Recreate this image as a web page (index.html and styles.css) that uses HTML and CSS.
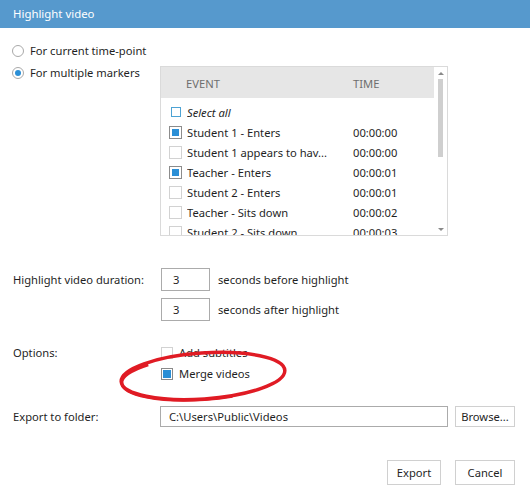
FILE: index.html
```html
<!DOCTYPE html>
<html>
<head>
<meta charset="utf-8">
<link rel="stylesheet" href="styles.css">
</head>
<body>
<div class="dialog">
  <div class="title">Highlight video</div>
  <div class="content">
    <div class="markers">
      <label class="radio-row span-all"><span class="radio"></span>For current time-point</label>
      <label class="radio-row second"><span class="radio on"></span>For multiple markers</label>
      <div class="listbox">
        <div class="lb-main">
          <div class="lb-head"><span class="col-event">EVENT</span><span class="col-time">TIME</span></div>
          <div class="lb-rows">
            <div class="lb-row"><span class="cb-slot"><span class="cb-mini"></span></span><span class="col-name italic">Select all</span></div>
            <div class="lb-row"><span class="cb-slot"><span class="cb checked"></span></span><span class="col-name">Student 1 - Enters</span><span class="col-t">00:00:00</span></div>
            <div class="lb-row"><span class="cb-slot"><span class="cb"></span></span><span class="col-name">Student 1 appears to hav...</span><span class="col-t">00:00:00</span></div>
            <div class="lb-row"><span class="cb-slot"><span class="cb checked"></span></span><span class="col-name">Teacher - Enters</span><span class="col-t">00:00:01</span></div>
            <div class="lb-row"><span class="cb-slot"><span class="cb"></span></span><span class="col-name">Student 2 - Enters</span><span class="col-t">00:00:01</span></div>
            <div class="lb-row"><span class="cb-slot"><span class="cb"></span></span><span class="col-name">Teacher - Sits down</span><span class="col-t">00:00:02</span></div>
            <div class="lb-row"><span class="cb-slot"><span class="cb"></span></span><span class="col-name">Student 2 - Sits down</span><span class="col-t">00:00:03</span></div>
          </div>
        </div>
        <div class="scrollbar">
          <span class="arrow up"></span>
          <span class="thumb"></span>
          <span class="spacer"></span>
          <span class="arrow down"></span>
        </div>
      </div>
    </div>

    <div class="form">
      <div class="label dur-label">Highlight video duration:</div>
      <div class="ctrl dur1"><span class="num">3</span><span>seconds before highlight</span></div>
      <div class="ctrl dur2"><span class="num">3</span><span>seconds after highlight</span></div>

      <div class="label opt-label">Options:</div>
      <div class="ctrl opt1"><span class="cb opt"></span><span>Add subtitles</span></div>
      <div class="ctrl opt2"><span class="cb opt checked"></span><span>Merge videos</span></div>

      <div class="label exp-label">Export to folder:</div>
      <div class="ctrl exp"><span class="path">C:\Users\Public\Videos</span><span class="btn browse">Browse...</span></div>
    </div>

    <div class="footer">
      <span class="btn big export">Export</span>
      <span class="btn big cancel">Cancel</span>
    </div>
  </div>

  <svg class="annot" width="530" height="497" viewBox="0 0 530 497">
    <ellipse cx="203" cy="376" rx="82" ry="23" fill="none" stroke="#e01b24" stroke-width="3.5" transform="rotate(-4 203 376)"/>
    <ellipse cx="203" cy="377.5" rx="81.5" ry="22" fill="none" stroke="#e01b24" stroke-width="3" stroke-dasharray="0 60 150 400" transform="rotate(-4 203 376)"/>
  </svg>
</div>
</body>
</html>
```

FILE: styles.css
```css
html, body {
  margin: 0;
  padding: 0;
  background: #ffffff;
}
body {
  font-family: "Noto Sans", "DejaVu Sans", sans-serif;
  font-size: 11.2px;
  color: #1f1f1f;
}
.dialog {
  position: relative;
  width: 530px;
  height: 497px;
  overflow: hidden;
}
.title {
  height: 28px;
  line-height: 27px;
  background: #5699cd;
  color: #ffffff;
  padding-left: 13px;
  font-size: 11.4px;
}
.content {
  padding: 0 15px 0 12px;
}
.markers {
  display: grid;
  grid-template-columns: 148px 288px;
  margin-top: 12px;
}
.span-all { grid-column: 1 / -1; }
.radio-row {
  display: flex;
  align-items: center;
  height: 20px;
  gap: 6px;
}
.radio-row.second {
  align-self: start;
  margin-top: 2px;
}
.radio {
  width: 12px;
  height: 12px;
  box-sizing: border-box;
  border: 1px solid #a9a9a9;
  border-radius: 50%;
  display: flex;
  align-items: center;
  justify-content: center;
  margin-top: 1px;
}
.radio.on::after {
  content: "";
  width: 6px;
  height: 6px;
  border-radius: 50%;
  background: #2b8fd6;
}
.listbox {
  margin-top: 6px;
  width: 288px;
  height: 170px;
  box-sizing: border-box;
  border: 1px solid #dadada;
  display: flex;
  overflow: hidden;
}
.lb-main {
  width: 273px;
  display: flex;
  flex-direction: column;
}
.lb-head {
  height: 31px;
  box-sizing: border-box;
  padding-top: 1px;
  flex: none;
  background: #e6e6e6;
  color: #6e6e6e;
  display: flex;
  align-items: center;
  padding-left: 25px;
}
.col-event { width: 167px; }
.lb-rows { padding-top: 4px; }
.lb-row {
  height: 20px;
  display: flex;
  align-items: center;
  padding-left: 8px;
  white-space: nowrap;
}
.cb-slot {
  width: 13px;
  height: 13px;
  margin-right: 5px;
  display: flex;
  align-items: center;
  justify-content: center;
}
.col-name { width: 166px; overflow: hidden; }
.italic { font-style: italic; }
.cb {
  width: 13px;
  height: 13px;
  box-sizing: border-box;
  border: 1px solid #d2d2d2;
  display: flex;
  align-items: center;
  justify-content: center;
  flex: none;
}
.cb.checked { border-color: #8c8c8c; }
.cb.checked::after {
  content: "";
  width: 7px;
  height: 7px;
  background: #2b8fd6;
}
.cb-mini {
  width: 10px;
  height: 10px;
  box-sizing: border-box;
  border: 1px solid #4da3d4;
}
.scrollbar {
  width: 13px;
  display: flex;
  flex-direction: column;
  align-items: center;
}
.arrow {
  width: 0;
  height: 0;
  border-left: 3px solid transparent;
  border-right: 3px solid transparent;
}
.arrow.up {
  margin-top: 5px;
  border-bottom: 3px solid #8a8a8a;
}
.arrow.down {
  margin-bottom: 4px;
  border-top: 3px solid #8a8a8a;
}
.thumb {
  margin-top: 4px;
  width: 5px;
  height: 78px;
  background: #cfcfcf;
}
.spacer { flex: 1; }

.form {
  display: grid;
  grid-template-columns: 148px 1fr;
  margin-top: 32px;
}
.label {
  grid-column: 1;
  padding-left: 1px;
  display: flex;
  align-items: center;
}
.ctrl {
  grid-column: 2;
  display: flex;
  align-items: center;
  gap: 8px;
  padding-left: 1px;
}
.dur-label { grid-row: 1; height: 23px; }
.dur1 { grid-row: 1; }
.dur2 { grid-row: 2; margin-top: 7px; }
.num {
  width: 49px;
  height: 23px;
  box-sizing: border-box;
  border: 1px solid #ababab;
  padding-left: 11px;
  display: flex;
  align-items: center;
}
.opt-label { grid-row: 3; margin-top: 21px; height: 21px; }
.opt1 { grid-row: 3; margin-top: 21px; height: 21px; gap: 6px; }
.opt2 { grid-row: 4; height: 21px; gap: 6px; }
.cb.opt { width: 12px; height: 12px; }
.cb.opt.checked { border-color: #8a8a8a; }
.cb.opt.checked::after { width: 8px; height: 8px; }
.exp-label { grid-row: 5; margin-top: 22px; height: 21px; }
.exp { grid-row: 5; margin-top: 22px; gap: 7px; padding-left: 0; }
.path {
  width: 288px;
  height: 21px;
  box-sizing: border-box;
  border: 1px solid #ababab;
  padding-left: 8px;
  display: flex;
  align-items: center;
}
.btn {
  box-sizing: border-box;
  border: 1px solid #d0d0d0;
  display: flex;
  align-items: center;
  justify-content: center;
  background: #ffffff;
}
.browse { width: 60px; height: 21px; }
.footer {
  display: flex;
  justify-content: flex-end;
  gap: 14px;
  margin-top: 33px;
}
.big { height: 25px; }
.export { width: 54px; }
.cancel { width: 60px; }
.annot {
  position: absolute;
  left: 0;
  top: 0;
  pointer-events: none;
}
```
